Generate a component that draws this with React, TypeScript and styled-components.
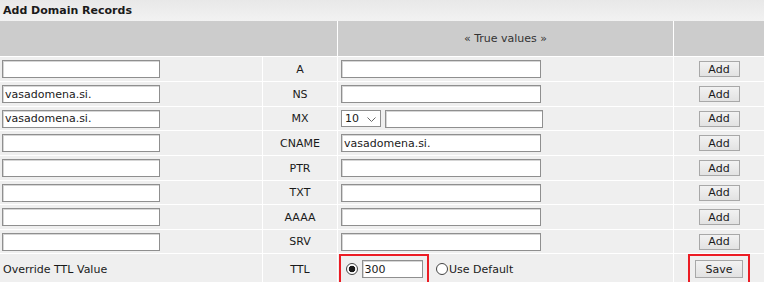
import React from 'react';
import styled, { createGlobalStyle } from 'styled-components';

const GlobalStyle = createGlobalStyle`
    body {
        margin: 0;
        background: #fff;
        font-family: "DejaVu Sans", Verdana, sans-serif;
        font-size: 11px;
        color: #1a1a1a;
    }
`;

const Panel = styled.div`
    width: 764px;
    display: flex;
    flex-direction: column;
`;

const TitleBar = styled.div`
    height: 21px;
    display: flex;
    align-items: center;
    padding-left: 3px;
    font-weight: bold;
    color: #1a1a1a;
    background: linear-gradient(#e8e8e8, #f2f2f2);
`;

const Table = styled.div`
    display: flex;
    flex-direction: column;
    gap: 1px;
`;

const Row = styled.div<{ $h: number }>`
    display: grid;
    grid-template-columns: 262px 74px 335px 90px;
    column-gap: 1px;
    height: ${(p) => p.$h}px;
`;

const HeadCell = styled.div<{ $span?: number }>`
    grid-column: span ${(p) => p.$span || 1};
    background: #cccccc;
    display: flex;
    align-items: center;
    justify-content: center;
    color: #333;
`;

const Cell = styled.div<{ $center?: boolean; $pad?: number }>`
    background: #efefef;
    display: flex;
    align-items: center;
    justify-content: ${(p) => (p.$center ? 'center' : 'flex-start')};
    padding-left: ${(p) => p.$pad || 0}px;
    gap: 4px;
`;

const TypeLabel = styled.span`
    color: #1a1a1a;
`;

const TextInput = styled.input<{ $w: number }>`
    box-sizing: border-box;
    width: ${(p) => p.$w}px;
    height: 18px;
    margin: 0;
    padding: 0 2px;
    border: 1px solid #8f8f8f;
    box-shadow: inset 1px 1px 0 #d6d6d6;
    background: #fff;
    font-family: inherit;
    font-size: 11px;
    color: #1a1a1a;
    outline: none;
`;

const SelectWrap = styled.div`
    position: relative;
    width: 40px;
    height: 17px;
`;

const Select = styled.select`
    box-sizing: border-box;
    appearance: none;
    width: 100%;
    height: 100%;
    margin: 0;
    padding: 0 0 0 3px;
    border: 1px solid #8f8f8f;
    background: #fff;
    font-family: inherit;
    font-size: 11px;
    color: #1a1a1a;
`;

const Chevron = styled.svg`
    position: absolute;
    right: 5px;
    top: 7px;
    pointer-events: none;
`;

const Button = styled.button<{ $w: number; $h: number }>`
    box-sizing: border-box;
    width: ${(p) => p.$w}px;
    height: ${(p) => p.$h}px;
    margin: 0;
    padding: 0;
    border: 1px solid #a8a8a8;
    background: linear-gradient(#f2f2f2, #e2e2e2);
    font-family: inherit;
    font-size: 11px;
    color: #1a1a1a;
`;

const Highlight = styled.div<{ $w: number }>`
    box-sizing: border-box;
    width: ${(p) => p.$w}px;
    height: 30px;
    border: 2px solid #ec1c24;
    display: flex;
    align-items: center;
    justify-content: center;
    gap: 4px;
    align-self: flex-start;
`;

const Radio = styled.input`
    appearance: none;
    box-sizing: border-box;
    width: 12px;
    height: 12px;
    margin: 0;
    border: 1px solid #444;
    border-radius: 50%;
    background: #fff;
    &:checked {
        background: radial-gradient(circle, #1a1a1a 0 3px, #fff 3.6px);
    }
`;

const RadioLabel = styled.label`
    display: flex;
    align-items: center;
    gap: 1px;
    margin-left: 3px;
    color: #1a1a1a;
`;

const records = [
    { type: 'A', host: '', value: '', h: 24 },
    { type: 'NS', host: 'vasadomena.si.', value: '', h: 24 },
    { type: 'MX', host: 'vasadomena.si.', value: '', h: 23, mx: true },
    { type: 'CNAME', host: '', value: 'vasadomena.si.', h: 24 },
    { type: 'PTR', host: '', value: '', h: 24 },
    { type: 'TXT', host: '', value: '', h: 23 },
    { type: 'AAAA', host: '', value: '', h: 24 },
    { type: 'SRV', host: '', value: '', h: 23 },
];

const App: React.FC = () => {
    return (
        <Panel>
            <GlobalStyle />
            <TitleBar>Add Domain Records</TitleBar>
            <Table>
                <Row $h={35}>
                    <HeadCell $span={2} />
                    <HeadCell>« True values »</HeadCell>
                    <HeadCell />
                </Row>
                {records.map((r) => (
                    <Row $h={r.h} key={r.type}>
                        <Cell $pad={2}>
                            <TextInput $w={158} defaultValue={r.host} />
                        </Cell>
                        <Cell $center>
                            <TypeLabel>{r.type}</TypeLabel>
                        </Cell>
                        <Cell $pad={3}>
                            {r.mx ? (
                                <>
                                    <SelectWrap>
                                        <Select defaultValue="10">
                                            <option value="10">10</option>
                                            <option value="20">20</option>
                                        </Select>
                                        <Chevron width="9" height="5" viewBox="0 0 9 5">
                                            <path d="M0.5 0.5 L4.5 4.5 L8.5 0.5" fill="none" stroke="#666" strokeWidth="1" />
                                        </Chevron>
                                    </SelectWrap>
                                    <TextInput $w={158} defaultValue="" />
                                </>
                            ) : (
                                <TextInput $w={200} defaultValue={r.value} />
                            )}
                        </Cell>
                        <Cell $center>
                            <Button $w={41} $h={16}>Add</Button>
                        </Cell>
                    </Row>
                ))}
                <Row $h={28}>
                    <Cell $pad={3}>Override TTL Value</Cell>
                    <Cell $center>
                        <TypeLabel>TTL</TypeLabel>
                    </Cell>
                    <Cell $pad={1}>
                        <Highlight $w={90}>
                            <Radio type="radio" name="ttl" defaultChecked />
                            <TextInput $w={61} defaultValue="300" />
                        </Highlight>
                        <RadioLabel>
                            <Radio type="radio" name="ttl" />
                            Use Default
                        </RadioLabel>
                    </Cell>
                    <Cell $pad={14}>
                        <Highlight $w={62}>
                            <Button $w={48} $h={18}>Save</Button>
                        </Highlight>
                    </Cell>
                </Row>
            </Table>
        </Panel>
    );
};

export default App;
